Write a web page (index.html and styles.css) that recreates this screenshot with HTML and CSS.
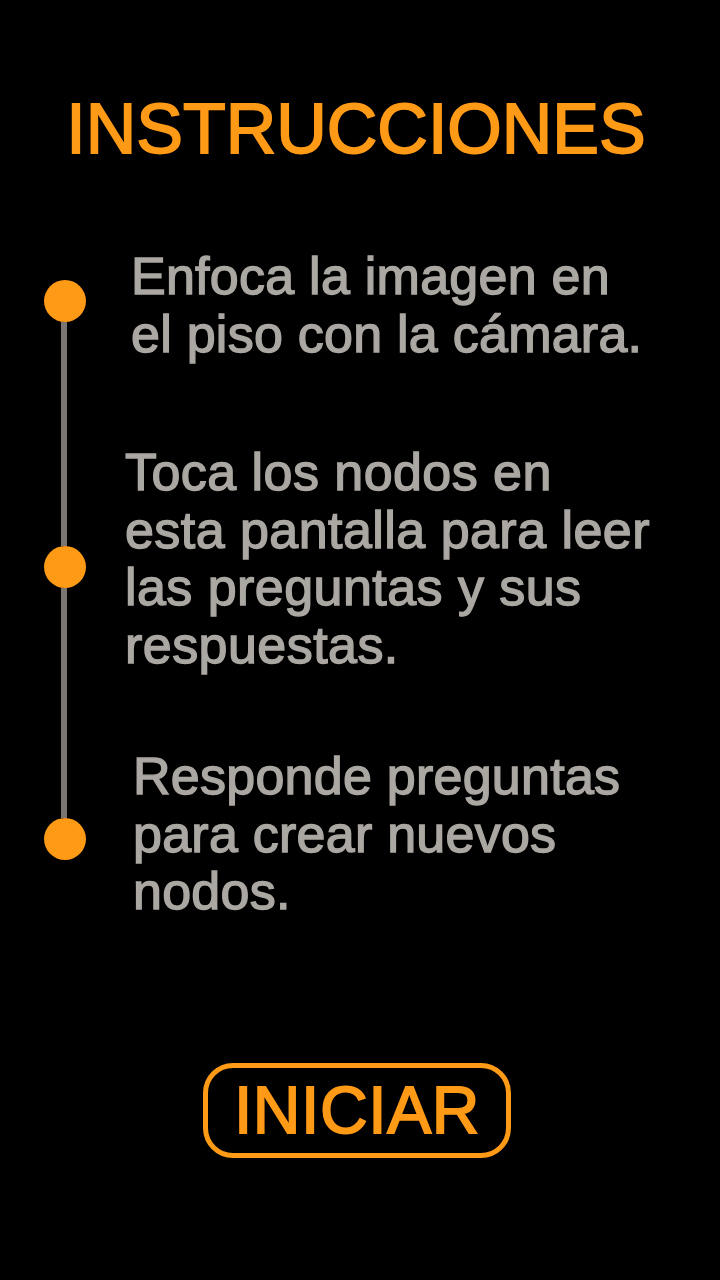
FILE: index.html
```html
<!DOCTYPE html>
<html lang="es">
<head>
<meta charset="utf-8">
<title>Instrucciones</title>
<link rel="stylesheet" href="styles.css">
</head>
<body>
<main class="screen">
  <h1 class="title">INSTRUCCIONES</h1>
  <section class="steps">
    <div class="timeline">
      <span class="dot"></span>
      <span class="seg seg-a"></span>
      <span class="dot"></span>
      <span class="seg seg-b"></span>
      <span class="dot"></span>
    </div>
    <div class="texts">
      <p class="step step-1">Enfoca la imagen en<br>el piso con la cámara.</p>
      <p class="step step-2">Toca los nodos en<br>esta pantalla para leer<br>las preguntas y sus<br>respuestas.</p>
      <p class="step step-3">Responde preguntas<br>para crear nuevos<br>nodos.</p>
    </div>
  </section>
  <div class="actions">
    <button class="start">INICIAR</button>
  </div>
</main>
</body>
</html>
```

FILE: styles.css
```css
html, body {
  margin: 0;
  padding: 0;
  background: #000;
}

.screen {
  width: 720px;
  height: 1280px;
  background: #000;
  font-family: "Liberation Sans", Arial, sans-serif;
  display: flex;
  flex-direction: column;
  overflow: hidden;
}

.title {
  margin: 89px 8px 0 0;
  font-size: 70px;
  line-height: 80px;
  font-weight: 400;
  color: #ff9a17;
  -webkit-text-stroke: 1.8px #ff9a17;
  text-align: center;
}

.steps {
  margin-top: 79px;
  display: flex;
  align-items: flex-start;
}

.timeline {
  margin: 32px 0 0 44px;
  width: 42px;
  display: flex;
  flex-direction: column;
  align-items: center;
}

.dot {
  width: 42px;
  height: 42px;
  border-radius: 50%;
  background: #ff9a17;
}

.seg {
  width: 6px;
  margin-left: -2px;
  background: #7b7571;
}

.seg-a { height: 224px; }
.seg-b { height: 230px; }

.texts {
  margin-left: 39px;
  display: flex;
  flex-direction: column;
}

.step {
  margin: 0;
  font-size: 52px;
  line-height: 57.5px;
  letter-spacing: 0.25px;
  color: #aba7a2;
  -webkit-text-stroke: 1.4px #aba7a2;
  white-space: nowrap;
}

.step-1 { padding-left: 6px; }
.step-2 { margin-top: 81px; letter-spacing: 0.45px; }
.step-3 { margin-top: 74px; padding-left: 8px; }

.actions {
  margin-top: 142px;
  display: flex;
  justify-content: flex-start;
  padding-left: 203px;
}

.start {
  width: 308px;
  height: 95px;
  box-sizing: border-box;
  border: 5px solid #ff9a17;
  border-radius: 30px;
  background: transparent;
  color: #ff9a17;
  -webkit-text-stroke: 1.8px #ff9a17;
  font-family: "Liberation Sans", Arial, sans-serif;
  font-size: 66px;
  line-height: 85px;
  letter-spacing: 0.6px;
  padding: 0;
  text-align: center;
}
```
